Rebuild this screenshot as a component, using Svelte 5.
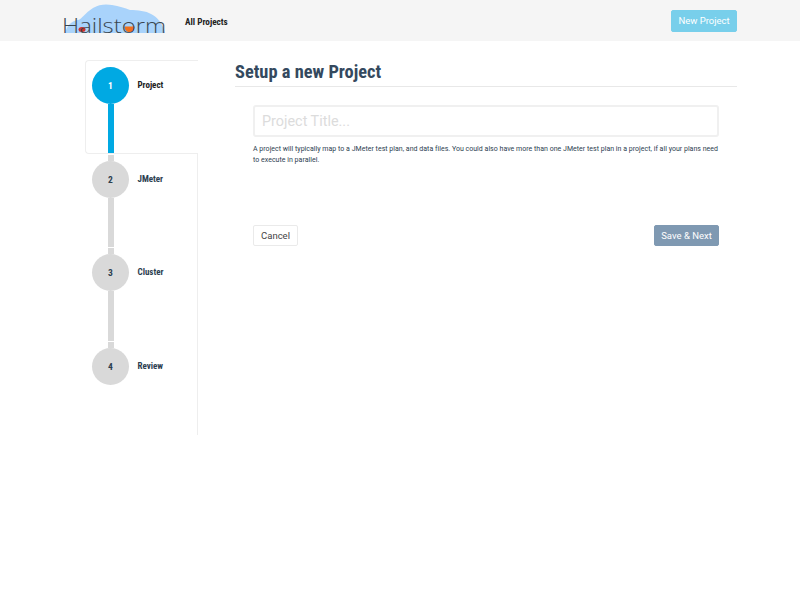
<script lang="ts">
  const steps = [
    { id: 1, label: 'Project', active: true },
    { id: 2, label: 'JMeter', active: false },
    { id: 3, label: 'Cluster', active: false },
    { id: 4, label: 'Review', active: false }
  ];
</script>

<header class="navbar">
  <svg class="logo" viewBox="0 0 106 41" width="106" height="41" aria-label="Hailstorm">
    <path class="cloud" d="M3 33 C5 26 9 21 16 20 C20 19 23 13 31 8 C37 4 45 4 50 5 C57 6 63 8 68 10 C76 10 84 11 89 14 C95 17 101 23 103 33 Z" />
    <ellipse class="drop-red" cx="20" cy="29.5" rx="3.5" ry="2.5" />
    <path class="drop-orange" d="M62.5 26.5 H72.5 C72.5 30 70.5 32 67.5 32 C64.5 32 62.5 30 62.5 26.5 Z" />
    <text x="0" y="32.5" class="logo-text" textLength="104" lengthAdjust="spacingAndGlyphs">Hailstorm</text>
  </svg>
  <a class="nav-link" href="#projects">All Projects</a>
  <button class="btn btn-new">New Project</button>
</header>

<main class="page">
  <nav class="wizard">
    {#each steps as step, i}
      <div class="step" class:active={step.active}>
        <div class="track">
          {#if i > 0}<span class="stub"></span>{/if}
          <span class="circle">{step.id}</span>
          {#if i < steps.length - 1}<span class="line"></span>{/if}
        </div>
        <span class="label">{step.label}</span>
      </div>
    {/each}
  </nav>

  <section class="content">
    <h1>Setup a new Project</h1>
    <div class="form">
      <input class="title-input" type="text" placeholder="Project Title..." />
      <p class="help">A project will typically map to a JMeter test plan, and data files. You could also have more than one JMeter test plan in a project, if all your plans need to execute in parallel.</p>
      <div class="actions">
        <button class="btn btn-cancel">Cancel</button>
        <button class="btn btn-save">Save &amp; Next</button>
      </div>
    </div>
  </section>
</main>

<style>
  :global(body) {
    font-family: Roboto, "Liberation Sans", sans-serif;
    color: #2c3e50;
    background: #fff;
  }

  .navbar {
    display: flex;
    align-items: center;
    height: 41px;
    padding: 0 63px 0 62px;
    background: #f5f5f5;
  }

  .logo {
    display: block;
    flex-shrink: 0;
  }

  .cloud {
    fill: #a9d3fb;
  }

  .drop-red {
    fill: #d0302a;
  }

  .drop-orange {
    fill: #f0701e;
  }

  .logo-text {
    font-family: "Open Sans", sans-serif;
    font-weight: 300;
    font-size: 20px;
    fill: #3a4650;
  }

  .nav-link {
    margin: 1px 0 0 17px;
    font-size: 9.2px;
    font-weight: 700;
    font-stretch: 75%;
    color: #222;
    text-decoration: none;
  }

  .btn {
    font-family: Roboto, sans-serif;
    font-size: 9.5px;
    border-radius: 2px;
    cursor: pointer;
  }

  .btn-new {
    margin-left: auto;
    width: 66px;
    height: 22px;
    padding: 0;
    border: 1px solid #78cfeb;
    background: #78cfeb;
    color: #fff;
  }

  .page {
    display: flex;
    align-items: flex-start;
    padding: 19px 63px 0 85px;
  }

  .wizard {
    width: 113px;
    flex-shrink: 0;
    display: flex;
    flex-direction: column;
  }

  .step {
    display: flex;
    height: 93.67px;
    box-sizing: border-box;
    padding-left: 7px;
    border-right: 1px solid #eee;
  }

  .step.active {
    border: 1px solid #eee;
    border-right: 0;
    border-radius: 4px 0 0 4px;
    padding-left: 6px;
    padding-top: 6px;
  }

  .track {
    display: flex;
    flex-direction: column;
    align-items: center;
    width: 37px;
    flex-shrink: 0;
  }

  .stub {
    width: 6px;
    height: 6px;
    margin-top: 1px;
    background: #d9d9d9;
  }

  .circle {
    flex-shrink: 0;
    display: flex;
    align-items: center;
    justify-content: center;
    width: 37px;
    height: 37px;
    border-radius: 50%;
    background: #d9d9d9;
    font-size: 9.5px;
    font-weight: 700;
    font-stretch: 75%;
    color: #2c3e50;
  }

  .line {
    flex: 1;
    width: 6px;
    background: #d9d9d9;
  }

  .active .circle {
    background: #00a9e3;
    color: #fff;
  }

  .active .line {
    background: #00a9e3;
  }

  .label {
    margin: 20px 0 0 8.5px;
    font-size: 9px;
    font-weight: 700;
    font-stretch: 75%;
    color: #2c3e50;
  }

  .active .label {
    margin-top: 13px;
    color: #222;
  }

  .content {
    flex: 1;
    min-width: 0;
    margin-left: 37px;
  }

  h1 {
    margin: 0;
    height: 26px;
    border-bottom: 1px solid #e8e8e8;
    font-size: 18.4px;
    line-height: 23px;
    font-weight: 700;
    font-stretch: 75%;
    color: #34495e;
  }

  .form {
    padding: 18px 18px 0;
  }

  .title-input {
    display: block;
    box-sizing: border-box;
    width: 100%;
    height: 32px;
    padding: 0 7px;
    border: 2px solid #f0f0f0;
    border-radius: 3px;
    font-family: Roboto, sans-serif;
    font-size: 14.4px;
    color: #2c3e50;
    outline: none;
  }

  .title-input::placeholder {
    color: #dcdcdc;
    opacity: 1;
  }

  .help {
    margin: 7px 0 0;
    font-size: 7px;
    letter-spacing: 0.02px;
    line-height: 11px;
    color: #2c3e50;
  }

  .actions {
    display: flex;
    justify-content: space-between;
    margin-top: 59px;
  }

  .btn-cancel {
    width: 45px;
    height: 21px;
    padding: 0;
    border: 1px solid #eaeaea;
    background: #fff;
    color: #444;
  }

  .btn-save {
    width: 65px;
    height: 21px;
    padding: 0;
    border: 1px solid #7f99b2;
    background: #7f99b2;
    color: #fff;
  }
</style>
